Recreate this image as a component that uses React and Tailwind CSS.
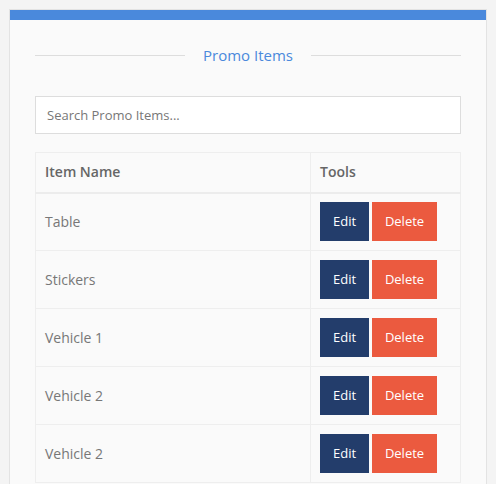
const items = ["Table", "Stickers", "Vehicle 1", "Vehicle 2", "Vehicle 2"];

export default function App() {
  return (
    <div
      className="min-h-screen bg-[#f4f4f4] px-[9px] pt-[9px]"
      style={{ fontFamily: '"Open Sans", "Liberation Sans", sans-serif' }}
    >
      <div className="border border-[#e3e3e3] bg-[#fafafa]">
        <div className="h-[10px] bg-[#4a89dc]" />
        <div className="px-[25px] pt-[25px] pb-6">
          <div className="flex items-center gap-[18px]">
            <div className="h-px flex-1 bg-[#dddddd]" />
            <h2 className="text-[15px] leading-5 text-[#4a89dc]">Promo Items</h2>
            <div className="h-px flex-1 bg-[#dddddd]" />
          </div>

          <input
            type="text"
            placeholder="Search Promo Items..."
            className="mt-[31px] block h-[38px] w-full border border-[#dddddd] bg-white px-[11px] text-[13px] text-[#555] placeholder:text-[#777] outline-none"
          />

          <table className="mt-[18px] w-full border-collapse text-[14px]">
            <thead>
              <tr className="h-[40px] border-b-2 border-[#ececec]">
                <th className="border border-[#eeeeee] px-[9px] pb-[2px] text-left font-semibold text-[#666]">
                  Item Name
                </th>
                <th className="w-[150px] border border-[#eeeeee] px-[9px] pb-[2px] text-left font-semibold text-[#666]">
                  Tools
                </th>
              </tr>
            </thead>
            <tbody>
              {items.map((name, i) => (
                <tr key={i} className="h-[58px]">
                  <td className="border border-[#eeeeee] px-[9px] text-[#777]">{name}</td>
                  <td className="border border-[#eeeeee] px-[9px]">
                    <div className="flex gap-[3px]">
                      <button className="h-[39px] w-[49px] bg-[#233d6b] text-[13px] text-white">
                        Edit
                      </button>
                      <button className="h-[39px] w-[65px] bg-[#eb5a3f] text-[13px] text-white">
                        Delete
                      </button>
                    </div>
                  </td>
                </tr>
              ))}
            </tbody>
          </table>
        </div>
      </div>
    </div>
  );
}
